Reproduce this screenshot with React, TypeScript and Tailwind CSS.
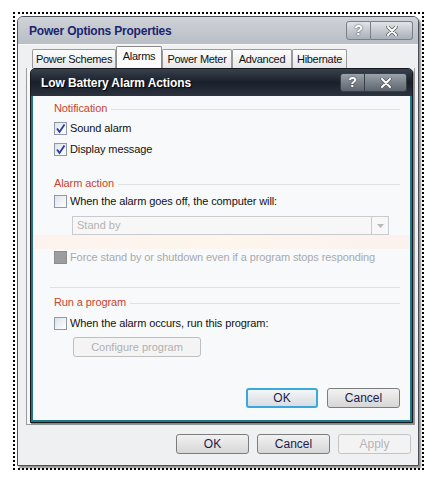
import React from "react";

const font = { fontFamily: '"Liberation Sans", Arial, sans-serif' };

const CheckBox = ({ checked, filled }: { checked?: boolean; filled?: boolean }) => (
  <div
    className={
      "w-[13px] h-[13px] border flex items-center justify-center shrink-0 " +
      (filled
        ? "border-[#8c8c8c] bg-[#9d9d9d]"
        : "border-[#8e9aab] bg-gradient-to-br from-[#dfe3e8] to-[#ffffff]")
    }
  >
    {checked && (
      <svg width="11" height="11" viewBox="0 0 11 11">
        <path d="M2 5.5 L4.5 9 L9.5 1.5" fill="none" stroke="#2b3a9c" strokeWidth="1.8" />
      </svg>
    )}
  </div>
);

const CheckRow = ({
  label,
  checked,
  muted,
  filled,
  mt,
}: {
  label: string;
  checked?: boolean;
  muted?: boolean;
  filled?: boolean;
  mt: string;
}) => (
  <div className={"flex items-center gap-[3px] h-[16px] " + mt}>
    <CheckBox checked={checked} filled={filled} />
    <span className={"text-[11px] tracking-[-0.1px] " + (muted ? "text-[#a9a9a9]" : "text-[#111]")}>{label}</span>
  </div>
);

const GroupHeader = ({ label, mt }: { label: string; mt: string }) => (
  <div className={"flex items-center gap-[4px] h-[16px] " + mt}>
    <span className="text-[11px] tracking-[-0.1px] text-[#c9452d]">{label}</span>
    <div className="flex-1 h-px bg-[#e0e3e6] mt-[2px]" />
  </div>
);

const Btn = ({ label, primary, disabled, w }: { label: string; primary?: boolean; disabled?: boolean; w: string }) => (
  <div
    className={
      "h-[20px] rounded-[3px] flex items-center justify-center text-[12px] " +
      w +
      " " +
      (disabled
        ? "border border-[#c4c4c4] bg-[#f3f3f3] text-[#b5b5b5]"
        : primary
        ? "border-2 border-[#3aa8dc] bg-gradient-to-b from-[#f4f6f8] to-[#d9dde1] text-[#1b1b4a]"
        : "border border-[#7d7d7d] bg-gradient-to-b from-[#f2f2f2] to-[#d6d6d6] text-[#1b1b4a]")
    }
  >
    {label}
  </div>
);

const TitleButtons = ({ dark }: { dark?: boolean }) => (
  <div className="flex">
    <div
      className={
        "w-[25px] h-[19px] rounded-l-[3px] border flex items-center justify-center text-[14px] font-bold text-white " +
        (dark
          ? "border-[#3a3f46] bg-gradient-to-b from-[#9aa2ab] to-[#5d656e]"
          : "border-[#7a8088] bg-gradient-to-b from-[#e1e5ea] to-[#a9b0b8]")
      }
      style={{ textShadow: "0 0 2px #333" }}
    >
      ?
    </div>
    <div
      className={
        "w-[42px] h-[19px] rounded-r-[3px] border border-l-0 flex items-center justify-center " +
        (dark
          ? "border-[#3a3f46] bg-gradient-to-b from-[#9aa2ab] to-[#5d656e]"
          : "border-[#7a8088] bg-gradient-to-b from-[#e1e5ea] to-[#a9b0b8]")
      }
    >
      <svg width="12" height="10" viewBox="0 0 12 10">
        <path d="M2 1 L10 9 M10 1 L2 9" stroke="#555" strokeWidth="3.4" strokeLinecap="round" />
        <path d="M2 1 L10 9 M10 1 L2 9" stroke="#fff" strokeWidth="2" strokeLinecap="round" />
      </svg>
    </div>
  </div>
);

const tabs = [
  { label: "Power Schemes", w: "w-[84px]" },
  { label: "Alarms", w: "w-[46px]", active: true },
  { label: "Power Meter", w: "w-[70px]" },
  { label: "Advanced", w: "w-[60px]" },
  { label: "Hibernate", w: "w-[55px]" },
];

export default function App() {
  return (
    <div className="w-[438px] h-[482px] bg-white pt-[12px] pl-[13px]" style={font}>
      <div className="w-[411px] h-[458px] border-2 border-dotted border-black pt-[2px] pl-[2px]">
        <div className="w-[402px] h-[450px] rounded-t-[6px] border border-[#4a4f55] bg-[#eff0f1] shadow-[2px_2px_2px_rgba(0,0,0,0.45)] flex flex-col">
          {/* outer title bar */}
          <div className="h-[27px] rounded-t-[5px] bg-gradient-to-b from-[#cfd3d8] to-[#b9bec4] flex items-center pl-[11px] pr-[5px]">
            <span className="text-[12px] font-bold text-[#1b2470] tracking-[-0.2px] flex-1">Power Options Properties</span>
            <TitleButtons />
          </div>

          {/* tabs */}
          <div className="h-[24px] flex items-end pl-[14px] border-t border-[#f8f8f8]">
            {tabs.map((t) => (
              <div
                key={t.label}
                className={
                  "flex items-center justify-center text-[11px] tracking-[-0.3px] text-[#111] border border-b-0 rounded-t-[2px] " +
                  t.w +
                  " " +
                  (t.active
                    ? "h-[22px] border-[#8c8c8c] bg-[#fbfbfb] pb-[3px]"
                    : "h-[19px] border-[#9a9a9a] bg-gradient-to-b from-[#fdfdfd] to-[#e6e7e9]")
                }
              >
                {t.label}
              </div>
            ))}
          </div>

          {/* tab panel */}
          <div className="ml-[8px] w-[389px] h-[357px] border-l border-r border-b border-[#9c9c9c] bg-[#f7f7f7] pl-[3px]">
            {/* low battery dialog */}
            <div className="w-[383px] h-[355px] border border-[#15181c] rounded-t-[5px] flex flex-col bg-[#1e7686] shadow-[1px_1px_1px_rgba(0,0,0,0.5)]">
              <div className="h-[27px] rounded-t-[4px] bg-gradient-to-b from-[#3a424e] via-[#1a202a] to-[#2c343f] flex items-center pl-[10px] pr-[5px]">
                <span
                  className="text-[12px] font-bold text-white tracking-[-0.1px] flex-1"
                  style={{ textShadow: "1px 1px 1px #000" }}
                >
                  Low Battery Alarm Actions
                </span>
                <TitleButtons dark />
              </div>
              <div className="flex-1 mx-[2px] mb-[2px] bg-[#f8f9fa] pl-[21px] pr-[10px] pt-[4px] flex flex-col">
                <GroupHeader label="Notification" mt="" />
                <CheckRow label="Sound alarm" checked mt="mt-[4px]" />
                <CheckRow label="Display message" checked mt="mt-[5px]" />

                <GroupHeader label="Alarm action" mt="mt-[18px]" />
                <CheckRow label="When the alarm goes off, the computer will:" mt="mt-[2px]" />
                <div className="mt-[7px] ml-[18px] w-[317px] h-[19px] border border-[#c9cccf] bg-[#f7f7f7] flex items-center">
                  <span className="flex-1 pl-[4px] text-[11px] text-[#b3b3b3]">Stand by</span>
                  <div className="w-[17px] h-[17px] border-l border-[#c9cccf] flex items-center justify-center">
                    <svg width="7" height="4" viewBox="0 0 7 4">
                      <path d="M0 0 L7 0 L3.5 4 Z" fill="#b8b8b8" />
                    </svg>
                  </div>
                </div>
                <div className="h-[14px] -ml-[21px] -mr-[10px] bg-gradient-to-r from-[#fcf3ee] via-[#fdf6ec] to-[#fbf1ee]" />
                <CheckRow
                  label="Force stand by or shutdown even if a program stops responding"
                  muted
                  filled
                  mt=""
                />
                <div className="mt-[22px] -ml-[4px] h-px bg-[#dfe2e5]" />

                <GroupHeader label="Run a program" mt="mt-[6px]" />
                <CheckRow label="When the alarm occurs, run this program:" mt="mt-[5px]" />
                <div className="mt-[6px] ml-[19px] w-[128px] h-[20px] rounded-[3px] border border-[#bfbfbf] bg-[#f4f4f4] flex items-center justify-center text-[11px] text-[#b0b0b0]">
                  Configure program
                </div>

                <div className="mt-[31px] flex justify-end gap-[9px]">
                  <Btn label="OK" primary w="w-[72px]" />
                  <Btn label="Cancel" w="w-[73px]" />
                </div>
              </div>
            </div>
          </div>

          {/* outer buttons */}
          <div className="mt-[9px] flex justify-end gap-[8px] pr-[7px]">
            <Btn label="OK" w="w-[73px]" />
            <Btn label="Cancel" w="w-[73px]" />
            <Btn label="Apply" disabled w="w-[73px]" />
          </div>
        </div>
      </div>
    </div>
  );
}
